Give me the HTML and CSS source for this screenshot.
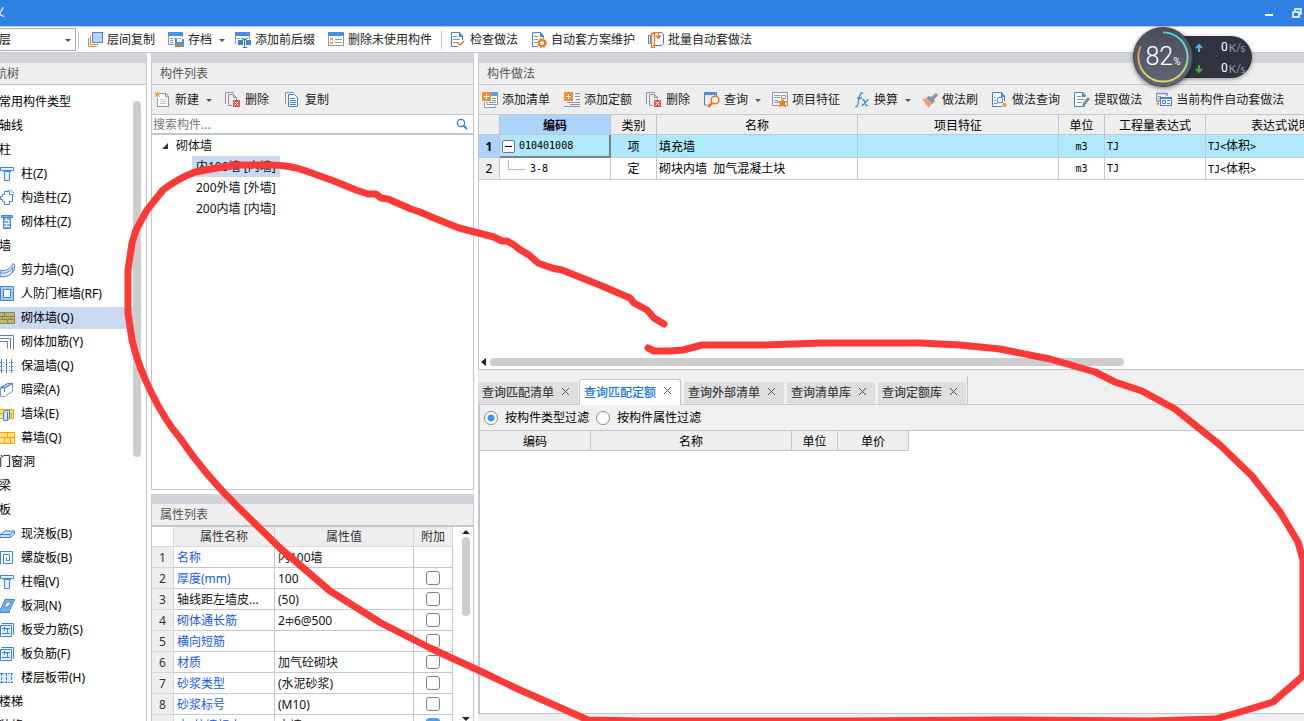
FILE: index.html
```html
<!DOCTYPE html>
<html lang="zh-CN">
<head>
<meta charset="utf-8">
<title>定义</title>
<link rel="stylesheet" href="styles.css">
</head>
<body>
<svg class="defs" aria-hidden="true">
  <symbol id="caret" viewBox="0 0 13 16"><path d="M7 7h6l-3 3z" fill="#555"/></symbol>
  <symbol id="layers" viewBox="0 0 16 16"><path d="M1.500 6v8.500h8M3.500 4v8.500h8" fill="none" stroke="#e8883a"/><rect x="5.500" y=".5" width="10" height="10" fill="#b5d3f8" stroke="#4a8ad4"/></symbol>
  <symbol id="archive" viewBox="0 0 16 16"><path d="M.5 12.500V1.500h14V5M0 12.500h6" fill="none" stroke="#8797a5"/><path d="M0 0h15v4H0z" fill="#4a90e2"/><path d="M2 6.500h3m1 0h3m1 0h3M2 8.500h3M2 10.500h3" stroke="#8797a5"/><path d="M7 7h9v8H7z" fill="#4a90e2"/><path d="M9 7h5v3H9z" fill="#fff"/><path d="M9 12h5v3H9z" fill="#e87722"/></symbol>
  <symbol id="affix" viewBox="0 0 16 16"><path d="M.5 12V1.500h14V7" fill="none" stroke="#8797a5"/><path d="M0 0h15v4H0z" fill="#4a90e2"/><path d="M2 6.500h3m1 0h3m1 0h3" stroke="#8797a5"/><path d="M3 8h5v5H3zM11 8h5v5h-5z" fill="#3f83d6"/><path d="M7.500 7.500h4M9.500 7.500v7M8 15.500h4" stroke="#2e6fc0" fill="none"/></symbol>
  <symbol id="unused" viewBox="0 0 16 16"><rect x=".5" y=".5" width="15" height="13" fill="#fff" stroke="#8797a5"/><path d="M0 0h16v4H0z" fill="#4a90e2"/><path d="M2 6l3 2m-3 0l3-2M2 10l3 2m-3 0l3-2" stroke="#f08b2c"/><path d="M7 7.500h7M7 10.500h7" stroke="#8797a5"/></symbol>
  <symbol id="check" viewBox="0 0 16 16"><path d="M12.500 8V4L9.500.5h-8v14H8" fill="#fff" stroke="#3f83d6"/><path d="M9 0v5h4z" fill="#3f83d6"/><path d="M3 4.500h4M3 7.500h7M3 10.500h4" stroke="#8797a5"/><path d="M7 10l3 3 4-4" fill="none" stroke="#e87722" stroke-width="1.500"/></symbol>
  <symbol id="docgear" viewBox="0 0 16 16"><path d="M12.500 6V4L9.500.5h-8v14H7" fill="#fff" stroke="#3f83d6"/><path d="M9 0v5h4z" fill="#3f83d6"/><path d="M3 4.500h4M3 7.500h4M3 10.500h3" stroke="#8797a5"/><circle cx="11" cy="11" r="3" fill="#fff" stroke="#e87722" stroke-width="2"/><circle cx="11" cy="11" r="4.500" fill="none" stroke="#e87722" stroke-dasharray="2 1.530"/></symbol>
  <symbol id="batch" viewBox="0 0 16 16"><path d="M6 .5h8l1.500 2v9l-2 2H5" fill="#fff" stroke="#3f83d6"/><path d="M.5 3.500h2v8h-2z" fill="#fff" stroke="#3f83d6"/><path d="M3.500 1.500h3v14h-3zM5 .5h5.500v5M8 3.500l2.500 3 2.500-3" fill="none" stroke="#e87722" stroke-width="1.300"/></symbol>
  <symbol id="new" viewBox="0 0 16 16"><path d="M5 1.500h6l2.500 3v10h-11V6M10.500 1v4H14" fill="#fff" stroke="#8797a5"/><path d="M5 7.500h6M5 9.500h6M5 11.500h6" stroke="#c2c9cf"/><path d="M0 0l5 5M5 0L0 5M2.500 0v5M0 2.500h5" stroke="#f39a32"/></symbol>
  <symbol id="delete" viewBox="0 0 16 16"><path d="M.5 12V.5H9M3.500 2.500h5l3 3V8M3.500 2.500v11H7M8.500 2.500v3h3" fill="none" stroke="#8797a5"/><path d="M8 8h7v7H8z" fill="#d9534f"/><path d="M9.500 9.500l4 4m0-4l-4 4" stroke="#fff"/></symbol>
  <symbol id="copy" viewBox="0 0 16 16"><path d="M.5 12V.5H9" fill="none" stroke="#8797a5"/><path d="M3.500 2.500h6l3 3v9h-9z" fill="#fff" stroke="#3f83d6"/><path d="M5 6.500h5M5 8.500h6M5 10.500h6M5 12.500h6" stroke="#3f83d6"/></symbol>
  <symbol id="addlist" viewBox="0 0 16 16"><path d="M8 .5h7.500v12H5v-3M13.500 14v1.500h-11V10" fill="#fff" stroke="#8797a5"/><path d="M9 0h7v4H9z" fill="#5b9ee8"/><path d="M10 6.500h4M7 10.500h7M10 8.500h4" stroke="#8797a5"/><path d="M0 0h9v9H0z" fill="#ee8e3c"/><path d="M2 4.500h5M4.500 2v5" stroke="#fff"/></symbol>
  <symbol id="addquota" viewBox="0 0 16 16"><path d="M11 1.500h5M11 4.500h5M12 7.500h4M3 10.500h13M0 14.500h16M6 12.500h10" stroke="#8797a5"/><path d="M0 0h9v9H0z" fill="#ee8e3c"/><path d="M2 4.500h5M4.500 2v5" stroke="#fff"/></symbol>
  <symbol id="query" viewBox="0 0 16 16"><path d="M.5 1v12H3M12.500 2v2" fill="none" stroke="#3f83d6"/><path d="M0 0h13v3H0z" fill="#4a90e2"/><circle cx="11" cy="8" r="3.800" fill="#fff" stroke="#e87722" stroke-width="1.500"/><path d="M8 11l-4 4" stroke="#e87722" stroke-width="2.500"/></symbol>
  <symbol id="feature" viewBox="0 0 16 16"><rect x=".5" y=".5" width="15" height="13" fill="#fff" stroke="#8797a5"/><path d="M2 3.500h6M2 5.500h6M2 8.500h4M2 10.500h4M9.500 3.500h4v3h-4z" fill="none" stroke="#8797a5"/><path d="M10.500 5.500L12 9l4 .3-3 2.500 1 3.700-3.500-2L7 15.500l1-3.700-3-2.500L9 9z" fill="#ef8228"/></symbol>
  <symbol id="fx" viewBox="0 0 16 16"><path d="M1 14.500c3 1.500 3-3 4-8s2-6.500 4-5M3 6h5M8 8c4-2 2 7 6 5.500M14.500 7.500c-2 0-4 6-7 6" fill="none" stroke="#3e86d8" stroke-width="1.300"/></symbol>
  <symbol id="brush" viewBox="0 0 16 16"><path d="M14 1l2 2-4 5 1 1-3 3-6-6 3-2 2 1z" fill="#8797a5"/><path d="M0 7l4-1 6 6-3 4z" fill="#ff9b70"/></symbol>
  <symbol id="docquery" viewBox="0 0 16 16"><path d="M12.500 9V4L9.500.5H.5v14H10" fill="#fff" stroke="#3f83d6"/><path d="M9 0v5h4z" fill="#3f83d6"/><path d="M2 5.500h2M2 8.500h2M2 11.500h4" stroke="#8797a5"/><circle cx="8" cy="8" r="3" fill="#e6f1ff" stroke="#3f83d6"/><path d="M10 10l2 2" stroke="#3f83d6"/><path d="M12.500 10.500L15 13l-2.500 2.500L10 13z" fill="#f39a20"/></symbol>
  <symbol id="extract" viewBox="0 0 16 16"><path d="M12 4L9 .5H.5v14h10v-3" fill="#fff" stroke="#3f83d6"/><path d="M8 0v5h4z" fill="#3f83d6"/><path d="M3 4.500h4M3 7.500h8M3 10.500h5" stroke="#8797a5"/><path d="M14 5l2 2-5 6-3 2 1-4z" fill="#7c8b98"/></symbol>
  <symbol id="autoset" viewBox="0 0 16 16"><path d="M0 1.500h11V4M.5 1v8H4" fill="none" stroke="#8797a5" stroke-width="1.500"/><path d="M2 4.500h3M2 6.500h2" stroke="#8797a5"/><path d="M0 12l3-2v3z" fill="#e87722"/><rect x="4.500" y="5.500" width="11" height="8" fill="#fff" stroke="#3f83d6"/><path d="M5 6.500h10M6.500 8.500h3v3h-3zM11 8.500h3M11 11.500h3" fill="none" stroke="#3f83d6"/></symbol>
  <symbol id="column" viewBox="0 0 16 16"><path d="M1.500 1.500h13v3h-13zM4.500 4.500v1h7v-1M5.500 5.500v9h5v-9" fill="#e5f1ff" stroke="#3f83d6"/></symbol>
  <symbol id="tiecol" viewBox="0 0 16 16"><path d="M5.500 1.500h5v3h3v7h-3v3h-5v-3h-2v-2h-2v-3h2v-2h2z" fill="#fff" stroke="#3f83d6"/><path d="M8 .5h5v2h2v4" fill="none" stroke="#9bc0ec"/></symbol>
  <symbol id="brickcol" viewBox="0 0 16 16"><path d="M2.500 1.500h11v2h-11zM4.500 3.500h7v11h-7z" fill="#7eaee8" stroke="#3f83d6"/><path d="M5 6.500h6M5 9.500h6M5 12.500h6M7.500 4v2M9.500 7v2M7.500 10v2" stroke="#fff"/></symbol>
  <symbol id="shear" viewBox="0 0 16 16"><path d="M1 8.500c5 1 10-1 13-7l1.500 1v5c-3 6-9 8-14.500 7z" fill="#dcecff" stroke="#3f83d6"/><path d="M1 11c6 1 11-2 12.500-6v5" fill="none" stroke="#3f83d6"/></symbol>
  <symbol id="frame" viewBox="0 0 16 16"><path d="M1.500.5h13v14h-13z" fill="#a9cbf5" stroke="#3f83d6"/><path d="M4.500 3.500h7v8h-7z" fill="#fff" stroke="#3f83d6"/></symbol>
  <symbol id="brick" viewBox="0 0 16 16"><path d="M0 2.500h15.500v11H0z" fill="#bdb878" stroke="#8d884a"/><path d="M0 6.500h16M0 9.500h16M5.500 2v4M11.500 6v4M3.500 6v4M8.500 10v4" stroke="#8d884a"/></symbol>
  <symbol id="rebar" viewBox="0 0 16 16"><path d="M1 1.500h13.500v14M1 4.500h10.500v10M1 7.500h7.500v7" fill="none" stroke="#66829e"/></symbol>
  <symbol id="insul" viewBox="0 0 16 16"><path d="M2.500 1v14M7.500 1v14M12.500 1v14" stroke="#3f83d6"/><path d="M1 4.500h13M1 8.500h13M1 12.500h13" stroke="#3f83d6" stroke-dasharray="1 2"/></symbol>
  <symbol id="hidden" viewBox="0 0 16 16"><path d="M1.500 6.500l4-1 8-4v8l-8 5h-4z" fill="#fff" stroke="#8797a5"/><path d="M1.500 5.500l7-4h5l-7 4zM5.500 6v4" fill="#a9cbf5" stroke="#3f83d6"/></symbol>
  <symbol id="pier" viewBox="0 0 16 16"><path d="M0 3.500h14.500v9H0z" fill="#ffe08a" stroke="#f5a800"/><path d="M0 7.500h15M4.500 3v5M12.500 8v5" stroke="#f5a800"/><path d="M4.500 6.500l2-2h4v8l-2 2h-4z" fill="#cfe3ff" stroke="#3f83d6"/><path d="M8.500 6v8" stroke="#3f83d6"/></symbol>
  <symbol id="curtain" viewBox="0 0 16 16"><path d="M0 2.500h15.500v11H0z" fill="#ffe08a" stroke="#f5a800"/><path d="M0 7.500h16M8.500 2v6M5.500 8v6M11.500 8v6" stroke="#f5a800"/></symbol>
  <symbol id="slab" viewBox="0 0 16 16"><path d="M1 9l5-4h9.500v3l-4 3.500H1z" fill="#cfe3ff" stroke="#3f83d6"/><path d="M1 8.500h10l4-3M11 9v2.500" fill="none" stroke="#3f83d6"/></symbol>
  <symbol id="spiral" viewBox="0 0 16 16"><path d="M1.500 1.500h12v12h-9v-9h6v6h-3v-3M1.500 14V1" fill="none" stroke="#3f83d6"/></symbol>
  <symbol id="hole" viewBox="0 0 16 16"><path d="M1 12.500L6 1.500h9.500l-5 11v2H1z" fill="#7eaee8" stroke="#3f83d6"/><path d="M5 9l3-5h4l-3 5z" fill="#fff" stroke="#3f83d6"/></symbol>
  <symbol id="slabbar" viewBox="0 0 16 16"><path d="M2.500 1.500h12v11M1.500 3.500h11v11h-11z" fill="#e5f1ff" stroke="#3f83d6"/><path d="M3 6.500h8M3 11.500h8M5.500 5v4M8.500 6v6" stroke="#3f83d6"/></symbol>
  <symbol id="strip" viewBox="0 0 16 16"><path d="M0 3h14v10H0z" fill="#dcecff"/><path d="M0 3.500h14M0 12.500h14" stroke="#3f83d6" stroke-dasharray="2 1"/><path d="M2.500 3v10M7.500 3v10M12.500 3v10" stroke="#3f83d6" stroke-dasharray="3 1"/></symbol>
</svg>

<div class="app">
  <header class="titlebar">
    <h1>定义</h1>
    <div class="winbtns">
      <button aria-label="最小化"><svg width="10" height="12"><path d="M1 7h8v2H1z" fill="#fff"/></svg></button>
      <button aria-label="还原"><svg width="10" height="12"><path d="M3 4V2h6v5H7M1 5h6v5H1z" fill="none" stroke="#fff" stroke-width="1.500"/></svg></button>
    </div>
  </header>

  <div class="topbar">
    <select aria-label="楼层"><option>首层</option></select>
    <svg class="select-caret"><use href="#caret"/></svg>
    <span class="sep"></span>
    <div class="tools">
      <button class="tool"><svg><use href="#layers"/></svg>层间复制</button>
      <button class="tool"><svg><use href="#archive"/></svg>存档<svg class="caret"><use href="#caret"/></svg></button>
      <button class="tool"><svg><use href="#affix"/></svg>添加前后缀</button>
      <button class="tool"><svg><use href="#unused"/></svg>删除未使用构件</button>
    </div>
    <span class="sep"></span>
    <div class="tools">
      <button class="tool"><svg><use href="#check"/></svg>检查做法</button>
      <button class="tool"><svg><use href="#docgear"/></svg>自动套方案维护</button>
      <button class="tool"><svg><use href="#batch"/></svg>批量自动套做法</button>
    </div>
  </div>

  <main class="workspace">
    <nav class="panel nav">
      <h2>导航树</h2>
      <div class="nav-body">
        <ul>
          <li><a class="group" href="#">常用构件类型</a></li>
          <li><a class="group" href="#">轴线</a></li>
          <li><a class="group" href="#">柱</a></li>
          <li><a href="#"><svg><use href="#column"/></svg>柱(Z)</a></li>
          <li><a href="#"><svg><use href="#tiecol"/></svg>构造柱(Z)</a></li>
          <li><a href="#"><svg><use href="#brickcol"/></svg>砌体柱(Z)</a></li>
          <li><a class="group" href="#">墙</a></li>
          <li><a href="#"><svg><use href="#shear"/></svg>剪力墙(Q)</a></li>
          <li><a href="#"><svg><use href="#frame"/></svg>人防门框墙(RF)</a></li>
          <li><a class="current" href="#"><svg><use href="#brick"/></svg>砌体墙(Q)</a></li>
          <li><a href="#"><svg><use href="#rebar"/></svg>砌体加筋(Y)</a></li>
          <li><a href="#"><svg><use href="#insul"/></svg>保温墙(Q)</a></li>
          <li><a href="#"><svg><use href="#hidden"/></svg>暗梁(A)</a></li>
          <li><a href="#"><svg><use href="#pier"/></svg>墙垛(E)</a></li>
          <li><a href="#"><svg><use href="#curtain"/></svg>幕墙(Q)</a></li>
          <li><a class="group" href="#">门窗洞</a></li>
          <li><a class="group" href="#">梁</a></li>
          <li><a class="group" href="#">板</a></li>
          <li><a href="#"><svg><use href="#slab"/></svg>现浇板(B)</a></li>
          <li><a href="#"><svg><use href="#spiral"/></svg>螺旋板(B)</a></li>
          <li><a href="#"><svg><use href="#column"/></svg>柱帽(V)</a></li>
          <li><a href="#"><svg><use href="#hole"/></svg>板洞(N)</a></li>
          <li><a href="#"><svg><use href="#slabbar"/></svg>板受力筋(S)</a></li>
          <li><a href="#"><svg><use href="#slabbar"/></svg>板负筋(F)</a></li>
          <li><a href="#"><svg><use href="#strip"/></svg>楼层板带(H)</a></li>
          <li><a class="group" href="#">楼梯</a></li>
          <li><a class="group" href="#">装修</a></li>
        </ul>
        <div class="vtrack"><div class="vthumb"></div></div>
      </div>
    </nav>

    <div class="middle">
      <section class="panel">
        <h2>构件列表</h2>
        <div class="toolbar">
          <button class="tool"><svg><use href="#new"/></svg>新建<svg class="caret"><use href="#caret"/></svg></button>
          <button class="tool"><svg><use href="#delete"/></svg>删除</button>
          <button class="tool"><svg><use href="#copy"/></svg>复制</button>
        </div>
        <div class="search">
          <input type="text" placeholder="搜索构件..." aria-label="搜索构件">
          <svg width="12" height="12"><circle cx="5" cy="5" r="3.600" fill="none" stroke="#2b86c8" stroke-width="1.300"/><path d="M7.500 7.500l3.500 3.500" stroke="#2b86c8" stroke-width="1.800"/></svg>
        </div>
        <ul class="tree">
          <li class="root"><svg width="8" height="8"><path d="M7 1v6H1z" fill="#333"/></svg>砌体墙</li>
          <li><span class="selected">内100墙 [内墙]</span></li>
          <li><span>200外墙 [外墙]</span></li>
          <li><span>200内墙 [内墙]</span></li>
        </ul>
      </section>

      <section class="panel">
        <h2>属性列表</h2>
        <div class="props-body">
          <table class="props">
            <colgroup><col class="c-no"><col class="c-name"><col class="c-value"><col class="c-add"></colgroup>
            <thead><tr><th class="corner"></th><th>属性名称</th><th>属性值</th><th>附加</th></tr></thead>
            <tbody>
              <tr><th>1</th><td class="key">名称</td><td>内100墙</td><td></td></tr>
              <tr><th>2</th><td class="key">厚度(mm)</td><td>100</td><td><input type="checkbox" aria-label="厚度附加"></td></tr>
              <tr><th>3</th><td>轴线距左墙皮...</td><td>(50)</td><td><input type="checkbox" aria-label="轴线附加"></td></tr>
              <tr><th>4</th><td class="key">砌体通长筋</td><td>2<span class="grade">中</span>6@500</td><td><input type="checkbox" aria-label="通长筋附加"></td></tr>
              <tr><th>5</th><td class="key">横向短筋</td><td></td><td><input type="checkbox" aria-label="短筋附加"></td></tr>
              <tr><th>6</th><td class="key">材质</td><td>加气砼砌块</td><td><input type="checkbox" aria-label="材质附加"></td></tr>
              <tr><th>7</th><td class="key">砂浆类型</td><td>(水泥砂浆)</td><td><input type="checkbox" aria-label="砂浆类型附加"></td></tr>
              <tr><th>8</th><td class="key">砂浆标号</td><td>(M10)</td><td><input type="checkbox" aria-label="砂浆标号附加"></td></tr>
              <tr><th>9</th><td class="key">内/外墙标志</td><td>内墙</td><td><input type="checkbox" checked aria-label="标志附加"></td></tr>
            </tbody>
          </table>
          <div class="props-scroll">
            <svg width="8" height="4"><path d="M0 4l4-4 4 4z" fill="#222"/></svg>
            <div class="vthumb"></div>
            <svg class="down" width="8" height="4"><path d="M0 0h8L4 4z" fill="#222"/></svg>
          </div>
        </div>
      </section>
    </div>

    <div class="right">
      <section class="panel">
        <h2>构件做法</h2>
        <div class="toolbar">
          <button class="tool"><svg><use href="#addlist"/></svg>添加清单</button>
          <button class="tool"><svg><use href="#addquota"/></svg>添加定额</button>
          <button class="tool"><svg><use href="#delete"/></svg>删除</button>
          <button class="tool"><svg><use href="#query"/></svg>查询<svg class="caret"><use href="#caret"/></svg></button>
          <button class="tool"><svg><use href="#feature"/></svg>项目特征</button>
          <button class="tool"><svg><use href="#fx"/></svg>换算<svg class="caret"><use href="#caret"/></svg></button>
          <button class="tool"><svg><use href="#brush"/></svg>做法刷</button>
          <button class="tool"><svg><use href="#docquery"/></svg>做法查询</button>
          <button class="tool"><svg><use href="#extract"/></svg>提取做法</button>
          <button class="tool"><svg><use href="#autoset"/></svg>当前构件自动套做法</button>
        </div>
        <div class="grid-body">
          <table class="grid">
            <colgroup><col class="g-no"><col class="g-code"><col class="g-unit"><col class="g-name"><col class="g-name"><col class="g-unit"><col class="g-expr"><col class="g-desc"></colgroup>
            <thead><tr><th></th><th class="active">编码</th><th>类别</th><th>名称</th><th>项目特征</th><th>单位</th><th>工程量表达式</th><th>表达式说明</th></tr></thead>
            <tbody>
              <tr class="picked"><th>1</th><td class="focus"><span class="codecell"><button class="fold" aria-label="折叠"></button><span class="mono">010401008</span></span></td><td class="mid">项</td><td>填充墙</td><td></td><td class="mid mono">m3</td><td class="mono">TJ</td><td><span class="mono">TJ&lt;</span>体积<span class="mono">&gt;</span></td></tr>
              <tr><th>2</th><td><span class="codecell"><i class="branch"></i><span class="mono">3-8</span></span></td><td class="mid">定</td><td>砌块内墙&nbsp; 加气混凝土块</td><td></td><td class="mid mono">m3</td><td class="mono">TJ</td><td><span class="mono">TJ&lt;</span>体积<span class="mono">&gt;</span></td></tr>
            </tbody>
          </table>
        </div>
        <div class="hscroll"><svg width="5" height="8"><path d="M5 0v8L0 4z" fill="#222"/></svg><div class="hthumb"></div></div>
      </section>

      <section class="query">
        <div class="tabs" role="tablist">
          <button class="tab" role="tab">查询匹配清单<svg><path d="M1 1l7 7M8 1L1 8"/></svg></button>
          <button class="tab on" role="tab" aria-selected="true">查询匹配定额<svg><path d="M1 1l7 7M8 1L1 8"/></svg></button>
          <button class="tab" role="tab">查询外部清单<svg><path d="M1 1l7 7M8 1L1 8"/></svg></button>
          <button class="tab" role="tab">查询清单库<svg><path d="M1 1l7 7M8 1L1 8"/></svg></button>
          <button class="tab" role="tab">查询定额库<svg><path d="M1 1l7 7M8 1L1 8"/></svg></button>
          <span class="tab-end"></span>
        </div>
        <div class="filters">
          <label><input type="radio" name="filter" checked>按构件类型过滤</label>
          <label><input type="radio" name="filter">按构件属性过滤</label>
        </div>
        <div class="result">
          <table class="grid small">
            <colgroup><col class="r-code"><col class="g-name"><col class="g-unit"><col class="r-price"></colgroup>
            <thead><tr><th>编码</th><th>名称</th><th>单位</th><th>单价</th></tr></thead>
          </table>
        </div>
      </section>
    </div>
  </main>
</div>

<aside class="monitor">
  <div class="speed">
    <div><svg width="8" height="8"><path d="M4 8V2M1 4l3-3 3 3" fill="none" stroke="#4ab4f0" stroke-width="2"/></svg><b>0</b><span>K/s</span></div>
    <div><svg width="8" height="8"><path d="M4 0v6M1 4l3 3 3-3" fill="none" stroke="#35b13c" stroke-width="2"/></svg><b>0</b><span>K/s</span></div>
  </div>
  <div class="dial">
    <svg viewBox="0 0 60 60">
      <defs>
        <linearGradient id="g1" x1="0" y1="0" x2="0" y2="1"><stop offset="0" stop-color="#3fd8dc"/><stop offset="1" stop-color="#b5e07a"/></linearGradient>
        <linearGradient id="g2" x1="0" y1="0" x2="0" y2="1"><stop offset="0" stop-color="#f07860"/><stop offset="1" stop-color="#f0d850"/></linearGradient>
      </defs>
      <path d="M30 4.500A25.500 25.500 0 0 1 48 48" stroke="url(#g1)"/>
      <path d="M48 48A25.500 25.500 0 0 1 12 48" stroke="#e2dc55"/>
      <path d="M12 48A25.500 25.500 0 0 1 7 19" stroke="url(#g2)"/>
    </svg>
    <strong>82</strong><small>%</small>
  </div>
</aside>

<svg class="ink" viewBox="0 0 1304 721" aria-hidden="true">
  <path d="M664 324L654 318 647 310 634 303 630 298 602 286 562 270 552 268 538 263 529 255 519 249 514 245 507 241 502 241 494 237 459 228 434 218 420 212 411 209 388 199 381 198 376 194 368 194 356 190 334 181 306 171Q290 165 270 165H234L195 172Q177 179 163 190L147 210 136 230 132 243 128 270V313L132 340Q138 366 152 394T180 438Q205 475 238 507L280 548 330 591 381 623 430 648 480 671 520 690 588 720 640 721 850 721 1000 720 1150 721 1215 719 1240 712 1273 702 1303 676V560L1298 542 1280 512 1252 476 1220 445 1175 409 1142 391 1115 382 1095 372 1050 359 1000 349 960 345 920 343H860L820 343 765 345H702L683 350 670 351H654L648 348"/>
</svg>
</body>
</html>
```
FILE: styles.css
```css
* { box-sizing: border-box; }
body {
  margin: 0;
  position: relative;
  height: 100vh;
  overflow: hidden;
  background: #fff;
  color: #111;
  font: 12px/16px "Noto Sans", "Noto Sans CJK SC", sans-serif;
}
button, input, select { font: inherit; color: inherit; }
button { border: 0; padding: 0; background: none; }
ul { list-style: none; margin: 0; padding: 0; }
h1, h2 { margin: 0; font-size: 12px; font-weight: 400; }
.defs { position: absolute; width: 0; height: 0; }

/* The window runs past the left edge of the screen. */
.app {
  display: flex;
  flex-direction: column;
  height: 100vh;
  margin-left: -20px;
}
.titlebar {
  display: flex;
  justify-content: space-between;
  align-items: center;
  height: 26px;
  padding: 0 2px 0 1px;
  background: #2d7fe1;
  color: #fff;
}
.winbtns { display: flex; gap: 18px; }
.winbtns svg { display: block; }

.topbar {
  display: flex;
  align-items: center;
  height: 27px;
  border-top: 1px solid #c3c6cf;
  border-bottom: 1px solid #c3c6cf;
}
.topbar select {
  width: 96px;
  height: 23px;
  padding: 0 6px;
  border: 1px solid #abadb3;
  border-radius: 0;
  background: #fff;
  appearance: none;
}
.select-caret { width: 13px; height: 16px; margin-left: -18px; margin-right: 5px; pointer-events: none; }
.sep { width: 1px; height: 18px; margin: 0 8px 0 2px; background: #c9cacd; }
.tools + .sep { margin: 0 8px 0 9px; }
.tools { display: flex; gap: 13px; }
.tool {
  display: flex;
  align-items: center;
  gap: 4px;
  height: 22px;
  color: #222;
  white-space: nowrap;
}
.tool svg { width: 16px; height: 16px; flex: none; }
.tool .caret { width: 13px; margin: 0 -3px 0 -4px; }

.workspace {
  flex: 1;
  min-height: 0;
  display: grid;
  grid-template-columns: 167px 323px minmax(0, 1fr);
  grid-template-rows: minmax(0, 1fr);
  gap: 4px;
}
.panel {
  display: flex;
  flex-direction: column;
  min-height: 0;
  overflow: hidden;
  border: 1px solid #c3c6cf;
  border-top: 10px solid #d3d4da;
}
.panel h2 {
  flex: none;
  height: 22px;
  padding: 3px 8px;
  background: #eee;
  border-bottom: 1px solid #c3c6cf;
  color: #555;
}
.nav { border-bottom: 0; }
.nav h2 { padding-left: 2px; }
.nav-body { display: flex; min-height: 0; padding-top: 4px; }
.nav-body ul { flex: 1; }
.nav-body li { height: 24px; padding-top: 2px; }
.nav-body a {
  display: flex;
  align-items: center;
  gap: 6px;
  height: 22px;
  padding-left: 18px;
  color: #000;
  text-decoration: none;
}
.nav-body a svg { width: 16px; height: 16px; }
.nav-body .current { background: #c9d9f0; }
.vtrack { width: 13px; padding-top: 12px; }
.vthumb { width: 8px; height: 356px; flex: none; border-radius: 4px; background: #cdcdcd; }

.middle {
  display: grid;
  grid-template-rows: minmax(0, 437fr) minmax(0, 227fr);
  gap: 4px;
}
.middle .panel:last-child { border-bottom: 0; }
.toolbar {
  flex: none;
  display: flex;
  align-items: center;
  gap: 14px;
  height: 30px;
  padding: 0 3px;
  background: #eee;
  border-bottom: 1px solid #c3c6cf;
}
.middle .toolbar { gap: 16px; }
.search {
  flex: none;
  display: flex;
  align-items: center;
  height: 20px;
  padding-right: 5px;
  border-bottom: 2px solid #c3c6cf;
}
.search input { flex: 1; height: 18px; padding: 0 1px; border: 0; outline: 0; }
.search input::placeholder { color: #757575; }
.tree li { display: flex; align-items: center; height: 21px; padding-left: 40px; }
.tree .root { gap: 7px; padding-left: 9px; }
.tree span { height: 21px; padding: 3px 4px 2px; }
.tree .selected { background: #c9d9f0; }

.props-body { flex: 1; display: flex; min-height: 0; overflow: hidden; border-top: 1px solid #c3c6cf; }
table { border-collapse: separate; border-spacing: 0; table-layout: fixed; }
th, td { padding: 1px 0 0; font-weight: 400; overflow: hidden; white-space: nowrap; }
.props { flex: none; align-self: flex-start; width: 301px; }
.c-no { width: 22px; }
.c-name { width: 101px; }
.c-value { width: 139px; }
.c-add { width: 39px; }
.props th, .props td {
  height: 21px;
  border-right: 1px solid #c3c6cf;
  border-bottom: 1px solid #c3c6cf;
}
.props thead th { height: 20px; }
.props th { background: #eee; color: #333; border-color: #d5d7dc; }
.props .corner { background: #fff; }
.props td { padding-left: 3px; }
.props .key { color: #1759e8; }
.props td:last-child { padding: 0; text-align: center; }
.grade { font-size: 9px; line-height: 12px; }
.props input {
  appearance: none;
  display: block;
  width: 14px;
  height: 14px;
  margin: 0 auto;
  border: 1px solid #808080;
  border-radius: 3px;
  background: #fff;
}
.props input:checked { background: #4a9ff5; border-color: #4a9ff5; }
.props-scroll {
  flex: 1;
  display: flex;
  flex-direction: column;
  align-items: center;
  gap: 3px;
  padding-top: 3px;
  padding-left: 6px;
}
.props-scroll svg { flex: none; }
.props-scroll .vthumb { height: 79px; }
.props-scroll .down { margin-top: auto; }

.right {
  display: grid;
  grid-template-rows: minmax(0, 317fr) minmax(0, 351fr);
  min-width: 0;
}
.right .panel { border-right: 0; }
.grid-body { flex: 1; min-height: 0; overflow: hidden; }
.grid { width: 878px; color: #000; }
.g-no { width: 21px; }
.g-code { width: 111px; }
.g-unit { width: 46px; }
.g-name { width: 201px; }
.g-expr { width: 101px; }
.g-desc { width: 151px; }
.r-code { width: 111px; }
.r-price { width: 71px; }
.grid th, .grid td {
  height: 22px;
  border-right: 1px solid #c3c6cf;
  border-bottom: 1px solid #c3c6cf;
}
.grid thead th { height: 20px; padding-top: 2px; background: #eee; }
.grid tbody th { background: #eee; }
.grid td { padding-left: 2px; }
.grid .mid { padding-left: 0; text-align: center; }
.grid thead .active { background: #acd4ff; font-weight: 700; }
.grid .picked th { background: #acd4ff; font-weight: 700; }
.grid .picked td { height: 23px; background: #aee8fa; }
.grid .picked .focus { border-right: 2px solid #7c8288; border-bottom: 2px solid #7c8288; }
.mono { font-family: "DejaVu Sans Mono", monospace; font-size: 10px; }
.codecell { display: flex; align-items: center; gap: 4px; }
.fold {
  width: 13px;
  height: 13px;
  border: 1px solid #777;
  border-radius: 2px;
  background: linear-gradient(#000, #000) center / 7px 1px no-repeat #fff;
}
.branch {
  width: 18px;
  height: 10px;
  margin: 0 0 8px 6px;
  border-left: 1px solid #bbb;
  border-bottom: 1px solid #bbb;
}
.hscroll { flex: none; display: flex; align-items: center; gap: 4px; height: 15px; padding-left: 2px; }
.hthumb { width: 77%; height: 8px; border-radius: 4px; background: #cdcdcd; }

.query {
  display: flex;
  flex-direction: column;
  min-height: 0;
  padding-bottom: 7px;
  background: #f0f0f0;
}
.tabs {
  flex: none;
  display: flex;
  align-items: flex-end;
  gap: 3px;
  height: 35px;
  border-bottom: 1px solid #c3c6cf;
}
.tab {
  display: flex;
  align-items: center;
  gap: 7px;
  height: 22px;
  padding: 0 8px 0 4px;
  border-radius: 3px 3px 0 0;
  background: #dedede;
  color: #444;
  font-weight: 500;
}
.tab svg { width: 9px; height: 9px; margin-bottom: 4px; fill: none; stroke: #555; }
.tab.on {
  height: 26px;
  margin-left: -2px;
  margin-bottom: -1px;
  border: 1px solid #c3c6cf;
  border-bottom: 0;
  background: #fff;
  color: #1677e0;
}
.tab-end { width: 1px; height: 28px; margin-left: -2px; background: #c3c6cf; }
.filters {
  flex: none;
  display: flex;
  gap: 7px;
  height: 26px;
  padding-left: 4px;
  border-left: 2px solid #c3c6cf;
  border-bottom: 1px solid #c3c6cf;
}
.filters label { display: flex; align-items: center; gap: 7px; color: #000; }
.filters input {
  appearance: none;
  width: 14px;
  height: 14px;
  margin: 0;
  border: 1px solid #888;
  border-radius: 50%;
  background: #fff;
}
.filters input:checked { background: radial-gradient(circle, #3f95ee 0 3px, #fff 4px); }
.result {
  flex: 1;
  min-height: 0;
  border-left: 2px solid #c3c6cf;
  border-bottom: 1px solid #c3c6cf;
  background: #fff;
}
.grid.small { width: 429px; }

/* Floating speed monitor */
.monitor { position: absolute; top: 27px; right: 52px; width: 119px; height: 60px; color: #fff; }
.speed {
  height: 42px;
  margin: 9px 0 0 30px;
  padding: 1px 0 0 32px;
  border-radius: 21px;
  background: #30333f;
  box-shadow: 0 1px 4px #0006;
}
.speed div { display: flex; align-items: center; height: 21px; }
.speed b { margin-left: 18px; font: 400 12px/21px Roboto, sans-serif; }
.speed span { margin-left: 1px; color: #9a9da5; font: 11px/21px Lato, sans-serif; }
.dial {
  position: absolute;
  top: 0;
  left: 0;
  display: flex;
  justify-content: center;
  align-items: baseline;
  width: 60px;
  height: 60px;
  border: 1px solid #3d414b;
  border-radius: 50%;
  background: linear-gradient(#4a4e5b, #606778);
  box-shadow: 0 1px 4px #0008;
}
.dial svg { position: absolute; inset: 0; fill: none; stroke-width: 2; }
.dial strong { font: 300 25px/58px Roboto, sans-serif; }
.dial small { font: 10px/58px Roboto, sans-serif; }

/* Freehand mark drawn over the window */
.ink {
  position: absolute;
  top: 0;
  left: 0;
  width: 1304px;
  height: 721px;
  pointer-events: none;
  fill: none;
  stroke: #fb3a38;
  stroke-width: 7;
  stroke-linecap: round;
  stroke-linejoin: round;
}
```
